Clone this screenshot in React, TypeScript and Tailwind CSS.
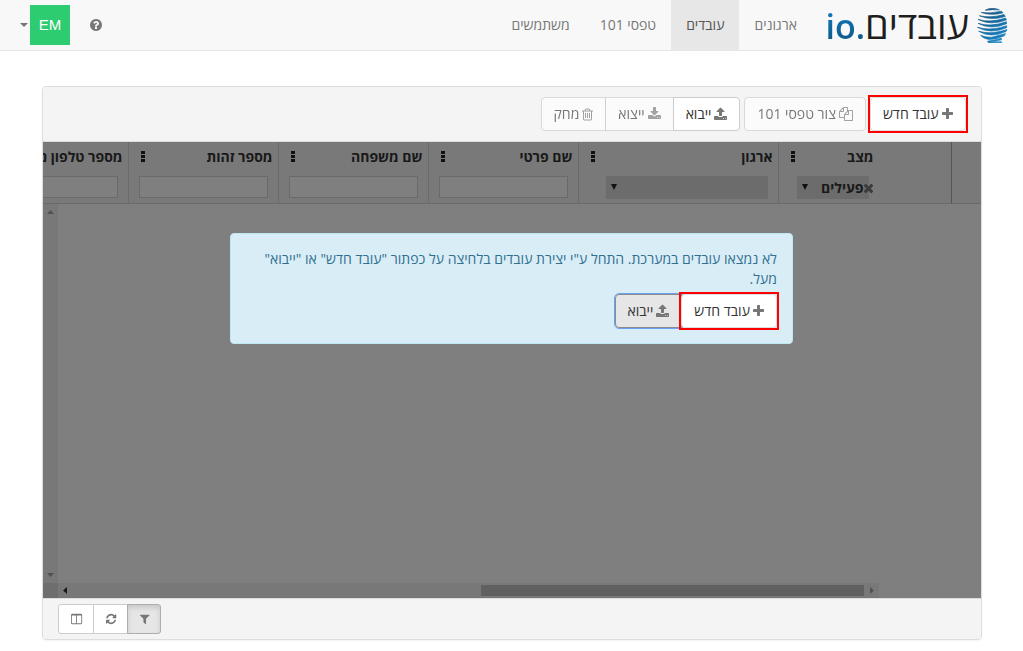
import type { ReactNode } from "react";
import clsx from "clsx";

const icons = {
  plus: {
    width: 1408,
    path: "M1408 736v192q0 40-28 68t-68 28h-416v416q0 40-28 68t-68 28h-192q-40 0-68-28t-28-68v-416h-416q-40 0-68-28t-28-68v-192q0-40 28-68t68-28h416v-416q0-40 28-68t68-28h192q40 0 68 28t28 68v416h416q40 0 68 28t28 68z",
  },
  upload: {
    width: 1664,
    path: "M1280 1472q0-26-19-45t-45-19-45 19-19 45 19 45 45 19 45-19 19-45zm256 0q0-26-19-45t-45-19-45 19-19 45 19 45 45 19 45-19 19-45zm128-224v320q0 40-28 68t-68 28h-1472q-40 0-68-28t-28-68v-320q0-40 28-68t68-28h427q21 56 70.5 92t110.5 36h256q61 0 110.5-36t70.5-92h427q40 0 68 28t28 68zm-325-648q-17 40-59 40h-256v448q0 26-19 45t-45 19h-256q-26 0-45-19t-19-45v-448h-256q-42 0-59-40-17-39 14-69l448-448q18-19 45-19t45 19l448 448q31 30 14 69z",
  },
  download: {
    width: 1664,
    path: "M1280 1344q0-26-19-45t-45-19-45 19-19 45 19 45 45 19 45-19 19-45zm256 0q0-26-19-45t-45-19-45 19-19 45 19 45 45 19 45-19 19-45zm128-224v320q0 40-28 68t-68 28h-1472q-40 0-68-28t-28-68v-320q0-40 28-68t68-28h465l135 136q58 56 136 56t136-56l136-136h464q40 0 68 28t28 68zm-325-569q17 41-14 70l-448 448q-18 19-45 19t-45-19l-448-448q-31-29-14-70 17-39 59-39h256v-448q0-26 19-45t45-19h256q26 0 45 19t19 45v448h256q42 0 59 39z",
  },
  trash: {
    width: 1408,
    path: "M512 800v576q0 14-9 23t-23 9h-64q-14 0-23-9t-9-23v-576q0-14 9-23t23-9h64q14 0 23 9t9 23zm256 0v576q0 14-9 23t-23 9h-64q-14 0-23-9t-9-23v-576q0-14 9-23t23-9h64q14 0 23 9t9 23zm256 0v576q0 14-9 23t-23 9h-64q-14 0-23-9t-9-23v-576q0-14 9-23t23-9h64q14 0 23 9t9 23zm128 724v-948h-896v948q0 22 7 40.5t14.5 27 10.5 8.5h832q3 0 10.5-8.5t14.5-27 7-40.5zm-672-1076h448l-48-117q-7-9-17-11h-317q-10 2-17 11zm928 32v64q0 14-9 23t-23 9h-96v948q0 83-47 143.5t-113 60.5h-832q-66 0-113-58.5t-47-141.5v-952h-96q-14 0-23-9t-9-23v-64q0-14 9-23t23-9h309l70-167q15-37 54-63t79-26h320q40 0 79 26t54 63l70 167h309q14 0 23 9t9 23z",
  },
  files: {
    width: 1792,
    path: "M1696 384q40 0 68 28t28 68v1216q0 40-28 68t-68 28h-960q-40 0-68-28t-28-68v-288h-544q-40 0-68-28t-28-68v-672q0-40 20-88t48-76l408-408q28-28 76-48t88-20h416q40 0 68 28t28 68v328q68-40 128-40h416zm-544 213l-299 299h299v-299zm-640-384l-299 299h299v-299zm196 647l316-316v-416h-384v416q0 40-28 68t-68 28h-416v640h512v-256q0-40 20-88t48-76zm956 804v-1152h-384v416q0 40-28 68t-68 28h-416v640h896z",
  },
  filter: {
    width: 1408,
    path: "M1403 295q17 41-14 70l-493 493v742q0 42-39 59-13 5-25 5-27 0-45-19l-256-256q-19-19-19-45v-486l-493-493q-31-29-14-70 17-39 59-39h1280q42 0 59 39z",
  },
  refresh: {
    width: 1536,
    path: "M1511 1056q0 5-1 7-64 268-268 434.5t-478 166.5q-146 0-282.5-55t-243.5-157l-129 129q-19 19-45 19t-45-19-19-45v-448q0-26 19-45t45-19h448q26 0 45 19t19 45-19 45l-137 137q71 66 161 102t187 36q134 0 250-65t186-179q11-17 53-117 8-23 30-23h192q13 0 22.5 9.5t9.5 22.5zm25-800v448q0 26-19 45t-45 19h-448q-26 0-45-19t-19-45 19-45l138-138q-148-137-349-137-134 0-250 65t-186 179q-11 17-53 117-8 23-30 23h-199q-13 0-22.5-9.5t-9.5-22.5v-7q65-268 270-434.5t480-166.5q146 0 284 55.5t245 156.5l130-129q19-19 45-19t45 19 19 45z",
  },
  columns: {
    width: 1664,
    path: "M160 1536h608v-1152h-640v1120q0 13 9.5 22.5t22.5 9.5zm1376-32v-1120h-640v1152h608q13 0 22.5-9.5t9.5-22.5zm128-1216v1216q0 66-47 113t-113 47h-1344q-66 0-113-47t-47-113v-1216q0-66 47-113t113-47h1344q66 0 113 47t47 113z",
  },
  question: {
    width: 1536,
    path: "M896 1376v-192q0-14-9-23t-23-9h-192q-14 0-23 9t-9 23v192q0 14 9 23t23 9h192q14 0 23-9t9-23zm256-672q0-88-55.5-163t-138.5-116-170-41q-243 0-371 213-15 24 8 42l132 100q7 6 19 6 16 0 25-12 53-68 86-92 34-24 86-24 48 0 85.5 26t37.5 59q0 38-20 61t-68 45q-63 28-115.5 86.5t-52.5 125.5v36q0 14 9 23t23 9h192q14 0 23-9t9-23q0-19 21.5-49.5t54.5-49.5q32-18 49-28.5t46-35 44.5-48 28-60.5 12.5-81zm384 192q0 209-103 385.5t-279.5 279.5-385.5 103-385.5-103-279.5-279.5-103-385.5 103-385.5 279.5-279.5 385.5-103 385.5 103 279.5 279.5 103 385.5z",
  },
  times: {
    width: 1408,
    path: "M1298 1322q0 40-28 68l-136 136q-28 28-68 28t-68-28l-294-294-294 294q-28 28-68 28t-68-28l-136-136q-28-28-28-68t28-68l294-294-294-294q-28-28-28-68t28-68l136-136q28-28 68-28t68 28l294 294 294-294q28-28 68-28t68 28l136 136q28 28 28 68t-28 68l-294 294 294 294q28 28 28 68z",
  },
};

function Icon({ name, className = "h-3.5" }: { name: keyof typeof icons; className?: string }) {
  const icon = icons[name];
  return (
    <svg viewBox={`0 0 ${icon.width} 1792`} className={clsx("w-auto shrink-0 fill-current", className)} aria-hidden="true">
      <path d={icon.path} />
    </svg>
  );
}

function HeadLogo() {
  return (
    <svg viewBox="0 0 94 105" className="h-[35px] w-[31px] shrink-0" aria-hidden="true">
      <defs>
        <linearGradient id="head" gradientUnits="userSpaceOnUse" x1="10" y1="0" x2="85" y2="105">
          <stop offset="0" stopColor="#1b4c70" />
          <stop offset="0.5" stopColor="#176ea6" />
          <stop offset="1" stopColor="#1487cb" />
        </linearGradient>
      </defs>
      <g fill="url(#head)" stroke="url(#head)" strokeWidth="2" strokeLinejoin="round">
        <path d="M25 6Q46-5 68 5Q48 4 25 6z" />
        <path d="M13 13Q42 17 74 9L79 14Q44 24 13 13z" />
        <path d="M7 23Q42 31 82 19L86 25Q44 39 7 23z" />
        <path d="M3 34Q40 45 87 30L89 36Q42 54 3 34z" />
        <path d="M3 46Q42 58 89 41L90 47Q42 67 3 46z" />
        <path d="M1 58Q40 70 90 53L90 59Q42 80 1 58z" />
        <path d="M5 70Q42 81 91 65L88 71Q42 92 5 70z" />
        <path d="M11 82Q26 89 44 88L87 77L82 84Q60 94 38 95Q18 92 11 82z" />
        <path d="M32 100Q52 97 74 91L74 96Q56 100 34 103z" />
        <path d="M34 102H75V104H34z" />
      </g>
    </svg>
  );
}

const navItems = [
  { label: "ארגונים", active: false },
  { label: "עובדים", active: true },
  { label: "טפסי 101", active: false },
  { label: "משתמשים", active: false },
];

function Navbar() {
  return (
    <header className="flex h-[51px] justify-between border-b border-[#e7e7e7] bg-[#f8f8f8]">
      <nav className="flex">
        <a href="#" className="flex w-[211px] items-center gap-2 pr-[15px]">
          <HeadLogo />
          <span className="text-[38px] leading-10 whitespace-nowrap text-[#1e1e1e]">
            עובדים
            <span className="bg-linear-to-b from-[#1482cc] to-[#0d4f7c] bg-clip-text text-[34px] font-semibold text-transparent">
              .io
            </span>
          </span>
        </a>
        {navItems.map((item) => (
          <a
            key={item.label}
            href="#"
            className={clsx("px-[15px] py-[15px]", item.active ? "bg-[#e7e7e7] text-[#555]" : "text-[#777]")}
          >
            {item.label}
          </a>
        ))}
      </nav>
      <div className="flex items-center pl-5">
        <a href="#" aria-label="עזרה" className="px-5 text-[#777]">
          <Icon name="question" />
        </a>
        <button type="button" className="flex items-center gap-0.5">
          <span className="flex size-10 items-center justify-center bg-[#2ecc71] font-['Liberation_Sans',sans-serif] text-[15px] text-white">
            EM
          </span>
          <svg viewBox="0 0 8 4" className="h-1 w-2 fill-[#777]" aria-hidden="true">
            <path d="M0 0h8L4 4z" />
          </svg>
        </button>
      </div>
    </header>
  );
}

function ToolButton({
  icon,
  children,
  disabled,
  className,
}: {
  icon: keyof typeof icons;
  children: ReactNode;
  disabled?: boolean;
  className?: string;
}) {
  return (
    <button
      type="button"
      disabled={disabled}
      className={clsx("flex h-[34px] items-center gap-[3px] border px-3 whitespace-nowrap text-[#333] disabled:opacity-65", className)}
    >
      <span className="text-[#777]">
        <Icon name={icon} />
      </span>
      {children}
    </button>
  );
}

function NewEmployeeButton() {
  return (
    <div className="relative z-10 outline-2 outline-[#f00]">
      <ToolButton icon="plus" className="rounded-sm border-[#ddd] bg-white">
        עובד חדש
      </ToolButton>
    </div>
  );
}

function Toolbar() {
  return (
    <div className="flex gap-1 border-b border-[#ddd] bg-[#f4f4f4] px-[15px] py-2.5">
      <NewEmployeeButton />
      <ToolButton icon="files" disabled className="rounded-sm border-[#ccc] bg-white">
        צור טפסי 101
      </ToolButton>
      <div className="flex">
        <ToolButton icon="upload" className="relative z-10 rounded-r-sm border-[#ccc] bg-white">
          ייבוא
        </ToolButton>
        <ToolButton icon="download" disabled className="-mr-px border-[#ccc] bg-white">
          ייצוא
        </ToolButton>
        <ToolButton icon="trash" disabled className="-mr-px rounded-l-sm border-[#ccc] bg-white">
          מחק
        </ToolButton>
      </div>
    </div>
  );
}

const columns = [
  { label: "מצב", width: "w-[173px]", title: "pr-[77px] pl-3", filter: "pr-[82px] pl-[18px]", kind: "status" },
  { label: "ארגון", width: "w-[200px]", title: "pr-[5px] pl-3", filter: "pr-2.5 pl-[27px]", kind: "select" },
  { label: "שם פרטי", width: "w-[150px]", title: "pr-[5px] pl-3", filter: "px-2.5", kind: "text" },
  { label: "שם משפחה", width: "w-[150px]", title: "pr-[5px] pl-3", filter: "px-2.5", kind: "text" },
  { label: "מספר זהות", width: "w-[150px]", title: "pr-[5px] pl-3", filter: "px-2.5", kind: "text" },
  { label: "מספר טלפון נייד", width: "w-[150px]", title: "pr-[5px] pl-3", filter: "px-2.5", kind: "text" },
];

function ColumnFilter({ label, kind }: { label: string; kind: string }) {
  if (kind === "text") {
    return <input type="text" aria-label={label} className="block h-[22px] w-full border border-[#d4d4d4] bg-white px-1" />;
  }
  return (
    <div className="relative">
      <select aria-label={label} className="block h-[23px] w-full appearance-none bg-[#d9d9d9] pr-[5px] pl-4 font-bold text-[#333]">
        <option>{kind === "status" ? "פעילים" : ""}</option>
      </select>
      <svg viewBox="0 0 6 6" className="pointer-events-none absolute top-2 left-[5px] size-1.5 fill-[#222]" aria-hidden="true">
        <path d="M0 0h6L3 6z" />
      </svg>
      {kind === "status" && (
        <button type="button" aria-label="נקה" className="absolute top-[5px] -right-[5px] text-[#777]">
          <Icon name="times" />
        </button>
      )}
    </div>
  );
}

function GridHeader() {
  return (
    <table className="w-[1003px] table-fixed border-separate border-spacing-0 bg-[#f2f2f2] text-[#333]">
      <thead>
        <tr className="h-[30px]">
          <td className="w-[30px] border-l border-[#aaa]" />
          {columns.map((column) => (
            <th key={column.label} scope="col" className={clsx("border-l border-[#d4d4d4] p-0", column.width, column.title)}>
              <div className="flex items-center justify-between whitespace-nowrap">
                {column.label}
                <button type="button" aria-label="תפריט" className="pb-0.5">
                  <svg viewBox="0 0 4 11" className="h-[11px] w-1 fill-[#222]">
                    <path d="M0 0h4v3H0zM0 4h4v3H0zM0 8h4v3H0z" />
                  </svg>
                </button>
              </div>
            </th>
          ))}
        </tr>
        <tr className="h-8">
          <td className="border-b border-l border-b-[#d4d4d4] border-l-[#aaa]" />
          {columns.map((column) => (
            <td key={column.label} className={clsx("border-b border-l border-[#d4d4d4] pt-1 align-top", column.filter)}>
              <ColumnFilter label={column.label} kind={column.kind} />
            </td>
          ))}
        </tr>
      </thead>
    </table>
  );
}

function GridBody() {
  return (
    <div className="flex grow bg-white">
      <div className="flex grow flex-col justify-end">
        <div className="mr-[102px] flex h-[15px] items-center justify-between bg-[#f1f1f1] px-[5px]">
          <svg viewBox="0 0 4 7" className="h-[7px] w-1 fill-[#a3a3a3]">
            <path d="M0 0v7l4-3.500z" />
          </svg>
          <div className="flex grow px-1.5">
            <div className="h-[11px] w-[383px] bg-[#c1c1c1]" />
          </div>
          <svg viewBox="0 0 4 7" className="h-[7px] w-1 fill-[#333]">
            <path d="M4 0v7L0 3.500z" />
          </svg>
        </div>
      </div>
      <div className="flex w-[15px] flex-col">
        <div className="flex grow flex-col items-center justify-between bg-[#f1f1f1] py-1.5">
          <svg viewBox="0 0 7 4" className="h-1 w-[7px] fill-[#a3a3a3]">
            <path d="M0 4h7L3.500 0z" />
          </svg>
          <svg viewBox="0 0 7 4" className="h-1 w-[7px] fill-[#a3a3a3]">
            <path d="M0 0h7L3.500 4z" />
          </svg>
        </div>
        <div className="h-[15px] bg-[#dcdcdc]" />
      </div>
    </div>
  );
}

function EmptyAlert() {
  return (
    <div role="alert" className="mx-auto w-3/5 rounded-sm border border-[#bce8f1] bg-[#d9edf7] p-[15px] text-[#31708f]">
      <p>לא נמצאו עובדים במערכת. התחל ע"י יצירת עובדים בלחיצה על כפתור "עובד חדש" או "ייבוא" מעל.</p>
      <div className="mt-[5px] flex">
        <NewEmployeeButton />
        <ToolButton icon="upload" className="-mr-px rounded-l-sm border-[#8c8c8c] bg-[#e6e6e6] outline-1 outline-[#6ba1f5]">
          ייבוא
        </ToolButton>
      </div>
    </div>
  );
}

function Footer() {
  const button = "flex h-[30px] items-center justify-center border pl-[3px] text-[#777]";
  return (
    <div className="flex justify-end border-t border-[#ddd] bg-[#f4f4f4] px-[15px] py-[5px]">
      <button
        type="button"
        aria-label="סינון"
        aria-pressed="true"
        className={clsx(
          button,
          "relative z-10 w-[34px] rounded-r-[3px] border-[#adadad] bg-[#e6e6e6] inset-shadow-[0_3px_5px_rgba(0,0,0,0.125)]",
        )}
      >
        <Icon name="filter" className="h-3" />
      </button>
      <button type="button" aria-label="רענון" className={clsx(button, "-mr-px w-[35px] border-[#ccc] bg-white")}>
        <Icon name="refresh" className="h-3" />
      </button>
      <button type="button" aria-label="עמודות" className={clsx(button, "-mr-px w-9 rounded-l-[3px] border-[#ccc] bg-white")}>
        <Icon name="columns" className="h-3" />
      </button>
    </div>
  );
}

export default function App() {
  return (
    <div dir="rtl" className="min-h-screen bg-white font-['Open_Sans',sans-serif] text-sm leading-5">
      <Navbar />
      <main className="mx-auto mt-[35px] max-w-[940px] overflow-hidden rounded-sm border border-[#ddd] shadow-xs">
        <Toolbar />
        <div className="relative flex min-h-[456px] flex-col overflow-hidden">
          <GridHeader />
          <GridBody />
          <div className="absolute inset-0 bg-black/50 pt-[91px]">
            <EmptyAlert />
          </div>
        </div>
        <Footer />
      </main>
    </div>
  );
}
